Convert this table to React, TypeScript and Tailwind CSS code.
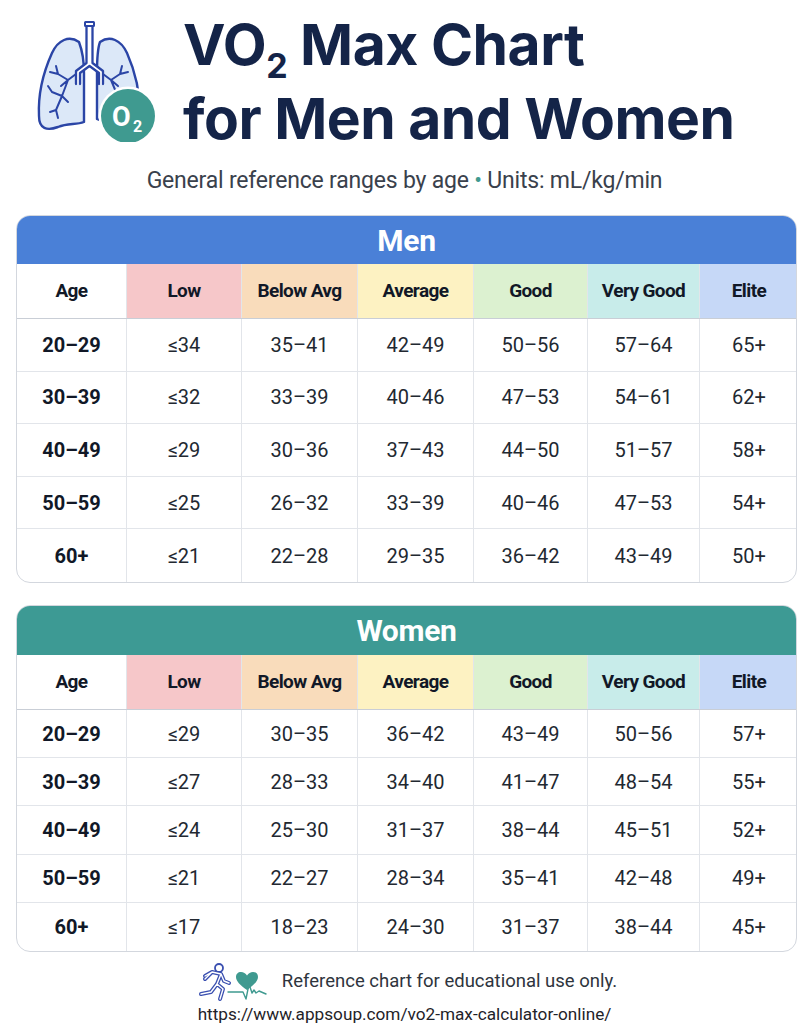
import React from "react";

const cols = "grid grid-cols-[109px_115px_116px_116px_114px_112px_99px]";

const headers = [
  { t: "Age", bg: "bg-white" },
  { t: "Low", bg: "bg-[#f6c7c9]" },
  { t: "Below Avg", bg: "bg-[#f9dcbb]" },
  { t: "Average", bg: "bg-[#fdf2c2]" },
  { t: "Good", bg: "bg-[#dcf1d0]" },
  { t: "Very Good", bg: "bg-[#c8ecea]" },
  { t: "Elite", bg: "bg-[#c6d8f7]" },
];

const men = [
  ["20–29", "≤34", "35–41", "42–49", "50–56", "57–64", "65+"],
  ["30–39", "≤32", "33–39", "40–46", "47–53", "54–61", "62+"],
  ["40–49", "≤29", "30–36", "37–43", "44–50", "51–57", "58+"],
  ["50–59", "≤25", "26–32", "33–39", "40–46", "47–53", "54+"],
  ["60+", "≤21", "22–28", "29–35", "36–42", "43–49", "50+"],
];

const women = [
  ["20–29", "≤29", "30–35", "36–42", "43–49", "50–56", "57+"],
  ["30–39", "≤27", "28–33", "34–40", "41–47", "48–54", "55+"],
  ["40–49", "≤24", "25–30", "31–37", "38–44", "45–51", "52+"],
  ["50–59", "≤21", "22–27", "28–34", "35–41", "42–48", "49+"],
  ["60+", "≤17", "18–23", "24–30", "31–37", "38–44", "45+"],
];

function Table({
  title,
  barBg,
  barH,
  rows,
  rowH,
}: {
  title: string;
  barBg: string;
  barH: string;
  rows: string[][];
  rowH: string;
}) {
  return (
    <div className="mx-[16px] w-[781px] overflow-hidden rounded-[14px] border border-[#d3d7de] bg-white">
      <div className={`${barBg} ${barH} flex items-center justify-center`}>
        <span className="text-[30px] font-bold tracking-[-0.3px] text-white">{title}</span>
      </div>
      <div className={`${cols} h-[55px] border-b-[1.5px] border-[#c9ced6]`}>
        {headers.map((h, i) => (
          <div
            key={h.t}
            className={`${h.bg} flex items-center justify-center ${i > 0 ? "border-l border-[#e2e5ea]" : ""} text-[19px] font-bold tracking-[-0.6px] text-[#111827]`}
          >
            {h.t}
          </div>
        ))}
      </div>
      {rows.map((r, ri) => (
        <div
          key={ri}
          className={`${cols} ${rowH} ${ri < rows.length - 1 ? "border-b border-[#e2e5ea]" : ""}`}
        >
          {r.map((c, ci) => (
            <div
              key={ci}
              className={`flex items-center justify-center ${ci > 0 ? "border-l border-[#e2e5ea]" : ""} text-[20px] ${ci === 0 ? "font-bold text-[#111827]" : "font-normal text-[#222831]"}`}
            >
              {c}
            </div>
          ))}
        </div>
      ))}
    </div>
  );
}

function LungIcon() {
  return (
    <svg width="130" height="130" viewBox="28 12 130 130" fill="none">
      {/* left lung */}
      <path
        d="M79 42 C69 35 58 40 52 53 C43 73 38 96 39 116 C39 129 47 131 58 127 C68 123 76 125 84 122 L84 73 C84 62 82 50 79 42 Z"
        fill="#dce8f8"
        stroke="#2b45a6"
        strokeWidth="2.4"
        strokeLinejoin="round"
      />
      {/* right lung */}
      <path
        d="M100 42 C110 35 121 40 127 53 C135 71 140 94 140 114 C140 124 132 126 120 124 C110 122 103 122 97 119 L97 73 C97 62 97 50 100 42 Z"
        fill="#dce8f8"
        stroke="#2b45a6"
        strokeWidth="2.4"
        strokeLinejoin="round"
      />
      {/* trachea body */}
      <path d="M86.5 25 L86.5 63 L76 71 L76 84 L80 84 L80 73 L89.5 66 L99 73 L99 84 L103 84 L103 71 L92.5 63 L92.5 25 Z" fill="#ffffff" />
      <path
        d="M86.5 26 L86.5 63 L76 71 L76 84 M92.5 26 L92.5 63 L103 71 L103 84 M80 84 L80 73 L89.5 66 L99 73 L99 84"
        stroke="#2b45a6"
        strokeWidth="2.3"
        strokeLinejoin="round"
        strokeLinecap="round"
      />
      <rect x="85" y="22" width="9" height="4" rx="0.5" fill="#ffffff" stroke="#2b45a6" strokeWidth="2" />
      {/* left bronchi branches */}
      <path
        d="M76 74 L68 80 L62 96 L56 110 M68 80 L58 74 M68 80 L61 86 M62 96 L52 92 M62 96 L68 102 M56 110 L50 112 M56 110 L58 118 M58 74 L56 66 M58 74 L50 72 M52 92 L48 86"
        stroke="#2b45a6"
        strokeWidth="2"
        strokeLinecap="round"
        strokeLinejoin="round"
      />
      {/* right bronchi branches */}
      <path
        d="M103 74 L111 80 L116 92 M111 80 L120 74 M111 80 L118 86 M120 74 L122 66 M120 74 L128 72 M116 92 L124 94"
        stroke="#2b45a6"
        strokeWidth="2"
        strokeLinecap="round"
        strokeLinejoin="round"
      />
      {/* O2 circle */}
      <circle cx="128" cy="116" r="29.5" fill="#ffffff" />
      <circle cx="128" cy="116" r="27" fill="#3f9a90" />
      <text x="112" y="126" fontSize="27" fontWeight="700" fill="#ffffff" fontFamily="Roboto, sans-serif">
        O
      </text>
      <text x="133" y="132" fontSize="16" fontWeight="700" fill="#ffffff" fontFamily="Roboto, sans-serif">
        2
      </text>
    </svg>
  );
}

function FooterIcon() {
  return (
    <svg width="76" height="40" viewBox="0 0 76 40" fill="none">
      {/* runner */}
      <circle cx="27" cy="6" r="4" stroke="#3a4fb0" strokeWidth="1.8" />
      <path
        d="M13 14 L20 10 L29 12 L32 19 L37 21 M29 12 L25 22 L31 27 L28 37 M25 22 L19 30 L9 32 M20 10 L13 17"
        stroke="#3a4fb0"
        strokeWidth="4"
        strokeLinecap="round"
        strokeLinejoin="round"
      />
      <path
        d="M13 14 L20 10 L29 12 L32 19 L37 21 M29 12 L25 22 L31 27 L28 37 M25 22 L19 30 L9 32 M20 10 L13 17"
        stroke="#ffffff"
        strokeWidth="1.4"
        strokeLinecap="round"
        strokeLinejoin="round"
      />
      {/* heart */}
      <path
        d="M55 28 C48 23 44 19 44 15 C44 12 46 10 49 10 C51.5 10 53.5 11.5 55 13.5 C56.5 11.5 58.5 10 61 10 C64 10 66 12 66 15 C66 19 62 23 55 28 Z"
        fill="#3f9a90"
      />
      {/* ecg */}
      <path
        d="M36 30 L51 30 L54 37 L57 22 L60 31 L62 28 L64 31 L67 29 L74 32"
        stroke="#3f9a90"
        strokeWidth="1.4"
        strokeLinejoin="round"
        strokeLinecap="round"
      />
    </svg>
  );
}

export default function App() {
  return (
    <div className="w-[809px] h-[1024px] overflow-hidden bg-white font-['Roboto',sans-serif]">
      <div className="flex items-start pl-[28px] pt-[8px]">
        <div className="mt-[4px]">
          <LungIcon />
        </div>
        <div className="ml-[25px] mt-[4px] font-['Inter',sans-serif] text-[57px] font-bold leading-[66px] tracking-[-0.5px] text-[#142448]">
          <div>
            VO<span className="relative top-[13px] text-[34px]">2</span> Max Chart
          </div>
          <div>for Men and Women</div>
        </div>
      </div>
      <div className="mt-[14px] text-center text-[23px] leading-[30px] tracking-[-0.2px] text-[#3a414c]">
        General reference ranges by age <span className="text-[#3f9a90]">•</span> Units: mL/kg/min
      </div>
      <div className="mt-[19px]">
        <Table title="Men" barBg="bg-[#4a80d7]" barH="h-[48px]" rows={men} rowH="h-[52.6px]" />
      </div>
      <div className="mt-[22px]">
        <Table title="Women" barBg="bg-[#3d9a94]" barH="h-[49px]" rows={women} rowH="h-[48.2px]" />
      </div>
      <div className="mt-[10px] flex items-center justify-center">
        <FooterIcon />
        <span className="ml-[14px] text-[18.5px] text-[#2e343d]">Reference chart for educational use only.</span>
      </div>
      <div className="mt-[0px] text-center text-[17.2px] text-[#1f2329]">
        https://www.appsoup.com/vo2-max-calculator-online/
      </div>
    </div>
  );
}
